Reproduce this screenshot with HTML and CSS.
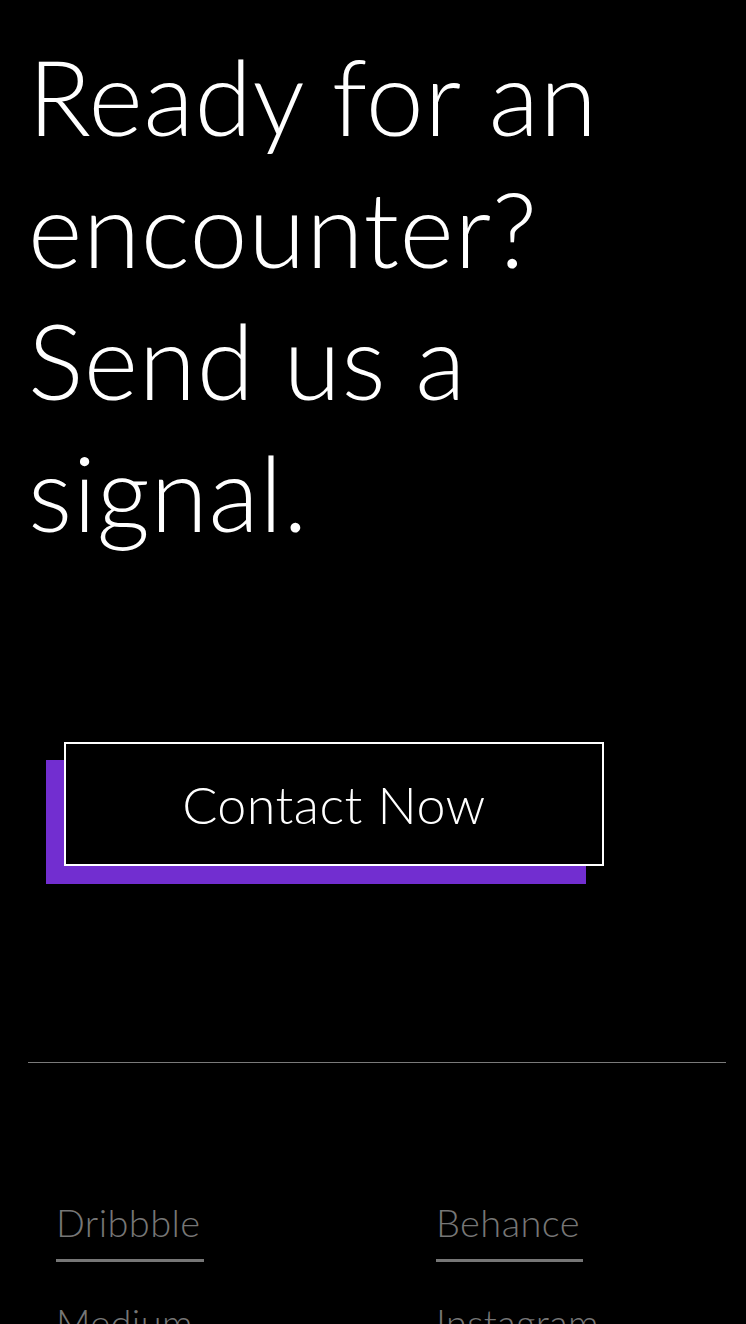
FILE: index.html
```html
<!DOCTYPE html>
<html lang="en">
<head>
<meta charset="utf-8">
<title>Contact</title>
<link rel="stylesheet" href="styles.css">
</head>
<body>
<main class="page">
  <h1 class="headline">Ready for an encounter? Send us a signal.</h1>
  <div class="cta-wrap">
    <a class="cta" href="#">Contact Now</a>
  </div>
  <hr class="divider">
  <nav class="links">
    <a class="link" href="#">Dribbble</a>
    <a class="link" href="#">Behance</a>
    <a class="link" href="#">Medium</a>
    <a class="link" href="#">Instagram</a>
  </nav>
</main>
</body>
</html>
```

FILE: styles.css
```css
html, body {
  margin: 0;
  padding: 0;
  background: #000;
}
body {
  font-family: "Lato", "Noto Sans", sans-serif;
  color: #fff;
  overflow: hidden;
  height: 1324px;
}
.page {
  padding: 0 20px 0 28px;
}
.headline {
  margin: 0;
  padding-top: 30px;
  font-weight: 300;
  font-size: 104px;
  line-height: 132px;
  letter-spacing: 0.7px;
  width: 640px;
}
.cta-wrap {
  padding: 184px 0 0 36px;
}
.cta {
  position: relative;
  display: flex;
  align-items: center;
  justify-content: center;
  width: 536px;
  height: 120px;
  border: 2px solid #fff;
  background: #000;
  color: #fff;
  text-decoration: none;
  font-size: 52px;
  font-weight: 300;
  letter-spacing: 0.5px;
  box-shadow: -18px 18px 0 0 #722ed0;
}
.divider {
  margin: 196px 0 0 0;
  border: 0;
  border-top: 1px solid #7a7a7a;
  height: 0;
}
.links {
  display: grid;
  grid-template-columns: 380px 1fr;
  row-gap: 36px;
  padding: 135px 0 0 28px;
}
.link {
  justify-self: start;
  color: #767676;
  text-decoration: none;
  font-size: 38px;
  font-weight: 300;
  letter-spacing: 0.4px;
  line-height: 48px;
  padding: 0 3px 13px 0;
  border-bottom: 3px solid #767676;
}
```
